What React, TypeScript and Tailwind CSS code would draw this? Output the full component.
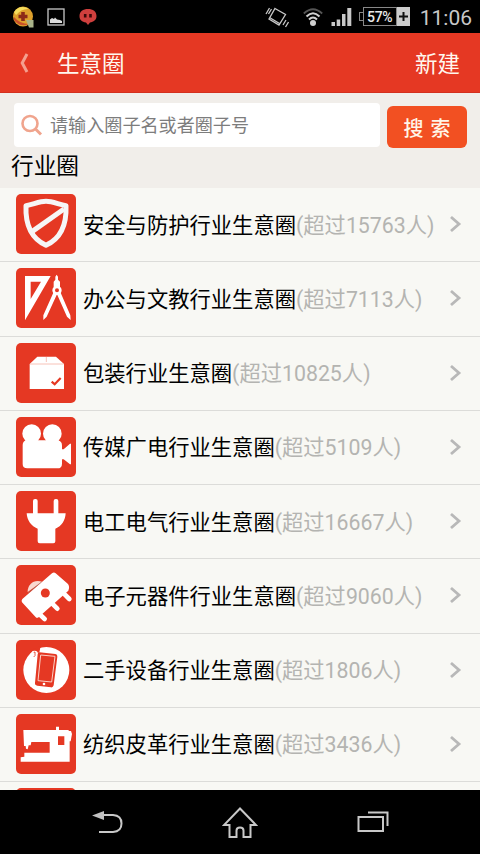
import type { ReactNode } from "react";

interface Circle {
  name: string;
  members: number;
  icon: ReactNode;
}

/* Industry glyphs, drawn on a 180 x 180 grid. */
const icons = {
  shield: (
    <g fill="none" stroke="#f6f6f6" strokeWidth="15" strokeLinejoin="round">
      <path d="M90 22C70 22 50 32 30 35C28 84 42 132 90 154C138 132 152 84 150 35C130 32 110 22 90 22Z" />
      <path d="M49 112L144 45" strokeWidth="15" />
    </g>
  ),
  drafting: (
    <g>
      <path
        d="M27 24H104L27 157ZM44 41V93L75 41Z"
        fill="#fff"
        fillRule="evenodd"
      />
      <path d="M118 26L122 20L126 26V35L132 41V57H113V41L118 35Z" fill="#fff" />
      <circle cx="123" cy="67" r="10" fill="none" stroke="#fff" strokeWidth="8" />
      <path d="M113 72L123 79L92 146L82 156L82 142ZM133 72L123 79L153 146L164 156L163 142Z" fill="#fff" />
    </g>
  ),
  box: (
    <g>
      <path d="M64 41H120L144 63V138H41V63Z" fill="#fff" />
      <path d="M42 63H143M91 42V57" stroke="#f3a595" strokeWidth="2" />
      <path d="M107 116L116 124L134 105" fill="none" stroke="#e53823" strokeWidth="6.500" />
    </g>
  ),
  camera: (
    <g fill="#fff">
      <circle cx="47" cy="50" r="28" />
      <circle cx="109" cy="50" r="28" />
      <path d="M30 70H126Q138 73 138 86V97H143L162 80H165V142H162L143 127H138V140Q138 154 124 154H34Q20 154 20 141V84Q20 74 30 70Z" />
    </g>
  ),
  plug: (
    <g fill="#fff">
      <rect x="51" y="24" width="14" height="50" rx="6" />
      <rect x="113" y="24" width="14" height="50" rx="6" />
      <path d="M32 67H149C148 88 137 106 118 113V151Q118 157 112 157H71Q65 157 65 151V113C46 106 33 88 32 67Z" />
    </g>
  ),
  chip: (
    <g>
      <path d="M35 81C34 58 54 42 78 50Z" fill="#f9d8cf" />
      <path d="M108 25Q114 20 119 25L156 57Q162 66 157 77L66 158Q62 160 58 155L18 112Q15 107 19 102Z" fill="#fff" />
      <path d="M143 85L160 102M108 115L124 131M70 147L86 162" stroke="#fff" strokeWidth="14" strokeLinecap="round" />
      <circle cx="88" cy="84" r="13.500" fill="#e53823" />
      <path d="M36 84L76 51" stroke="#8d8175" strokeWidth="1.500" />
    </g>
  ),
  phone: (
    <g>
      <circle cx="91" cy="90" r="69" fill="#fff" />
      <path d="M44 31L74 17L70 38H65L63 45L56 34Z" fill="#e53823" />
      <path d="M50 33Q65 29 66 42L62 53H48L43 42Z" fill="#fff" />
      <path d="M53 37L57 36V47L53 51" fill="none" stroke="#e53823" strokeWidth="2.500" />
      <path d="M70 37L118 42Q125 43 124 50L113 136Q111 143 105 142L64 137Q56 136 57 129L65 43Q66 37 70 37Z" fill="#e53823" />
      <path d="M74 45L117 49L107 126L66 122Z" fill="none" stroke="#fbd0c6" strokeWidth="3" />
      <circle cx="84" cy="132" r="4" fill="#fff" />
    </g>
  ),
  sewing: (
    <path
      d="M22 48H120V38H129V48H157L159 51H165L168 60L164 82H161V143H14V130L25 128V116H101V84H46L44 94H38L35 106L30 104L29 96H24ZM126 67V93H145V67Z"
      fill="#fff"
      fillRule="evenodd"
    />
  ),
};

const circles: Circle[] = [
  { name: "安全与防护行业生意圈", members: 15763, icon: icons.shield },
  { name: "办公与文教行业生意圈", members: 7113, icon: icons.drafting },
  { name: "包装行业生意圈", members: 10825, icon: icons.box },
  { name: "传媒广电行业生意圈", members: 5109, icon: icons.camera },
  { name: "电工电气行业生意圈", members: 16667, icon: icons.plug },
  { name: "电子元器件行业生意圈", members: 9060, icon: icons.chip },
  { name: "二手设备行业生意圈", members: 1806, icon: icons.phone },
  { name: "纺织皮革行业生意圈", members: 3436, icon: icons.sewing },
];

function StatusBar() {
  return (
    <div className="flex h-[33px] shrink-0 items-center bg-black pl-[12px] pr-[8px] text-[#c8c8c8]">
      <svg className="h-[22px] w-[22px]" viewBox="0 0 22 22">
        <circle cx="11" cy="10.500" r="10" fill="#dda02c" />
        <path d="M2 6Q8-2 17 3Q10 2 4 9Z" fill="#f3dc5c" />
        <path d="M2 14Q8 22 17 18Q8 18 2 11Z" fill="#c9502a" />
        <path d="M11 6V15M6.500 10.500H15.500" stroke="#8c2a18" strokeWidth="3.600" />
        <path d="M14 14H21.500V21.500H17Z" fill="#a9b389" />
      </svg>
      <svg className="ml-[13px] h-[18px] w-[18px]" viewBox="0 0 18 18">
        <rect x="1" y="1" width="16" height="16" fill="none" stroke="#c8c8c8" strokeWidth="1.300" />
        <path d="M3 15V11.500L5 10L7 11L8 9.500L10 11.500L13 12L15 13V15Z" fill="#ddd" />
      </svg>
      <svg className="ml-[14px] h-[18px] w-[18px]" viewBox="0 0 18 18">
        <path d="M9 1C14 1 17.500 3.500 17.500 8C17.500 12 14.500 14 11 14.500L9 17L7 14.500C3 14 .5 12 .5 8C.5 3.500 4 1 9 1Z" fill="#cf3f3d" />
        <path d="M6.200 6V9.500M11.500 6V9.500" stroke="#3a0808" strokeWidth="2.600" />
      </svg>
      <svg className="ml-auto h-[22px] w-[24px]" viewBox="0 0 24 22" fill="none" stroke="#c8c8c8" strokeWidth="1.300">
        <path d="M10 2.500L20.500 8.500L14 19L4 13ZM4.500 11.500L14.500 17.500M1 8L4.500 2M3.500 8L6.500 3M18 19L21 14M20.500 21L23.500 16" />
      </svg>
      <svg className="ml-[14px] h-[20px] w-[20px]" viewBox="0 0 20 20" fill="none">
        <path d="M.8 6.500Q10-2 19.200 6.500" stroke="#555" strokeWidth="1.800" />
        <path d="M3.500 9.500Q10 3 16.500 9.500M6 12.500Q10 8.500 14 12.500" stroke="#d0d0d0" strokeWidth="2" />
        <circle cx="10" cy="16" r="3" fill="#d0d0d0" />
      </svg>
      <svg className="ml-[8px] h-[18px] w-[21px]" viewBox="0 0 21 18" fill="#c8c8c8">
        <path d="M.5 14H4V18H.500ZM5.700 11.500H9.200V18H5.700ZM11 6H14.500V18H11ZM16.300 0H20.300V18H16.300Z" />
      </svg>
      <div className="ml-[7px] flex h-[19px] items-stretch">
        <span className="my-[5px] w-[4px] border border-r-0 border-[#888]" />
        <span className="flex w-[34px] items-center justify-center border border-[#888] text-[14px] font-medium leading-none tracking-[-0.3px] text-[#e8e8e8]">
          57%
        </span>
        <span className="flex w-[13px] items-center justify-center bg-[#cdcdcd]">
          <svg className="h-[9px] w-[9px]" viewBox="0 0 9 9">
            <path d="M4.500 0V9M0 4.500H9" stroke="#111" strokeWidth="2" />
          </svg>
        </span>
      </div>
      <span className="ml-[10px] pt-[3px] text-[21px] leading-none">11:06</span>
    </div>
  );
}

function Header() {
  return (
    <header className="flex h-[60px] shrink-0 items-center border-b border-[#d3301f] bg-[#e53823] px-[20px] text-[22.500px] text-[#fff7ee]">
      <svg className="h-[20px] w-[9px]" viewBox="0 0 9 20">
        <path d="M7 1L2.200 10L7 19" fill="none" stroke="#f4a08f" strokeWidth="3" />
      </svg>
      <h1 className="ml-[28px] pt-[5px]">生意圈</h1>
      <button type="button" className="ml-auto pt-[5px]">
        新建
      </button>
    </header>
  );
}

function SearchSection() {
  return (
    <section className="h-[95px] shrink-0 bg-[#f1eeea] pt-[10px]">
      <div className="flex gap-[7px] pl-[14px]">
        <div className="flex h-[44px] w-[366px] items-center rounded-[4px] bg-white pl-[7px]">
          <svg className="h-[22px] w-[22px]" viewBox="0 0 22 22" fill="none" stroke="#f0a48d">
            <circle cx="9" cy="9.500" r="7.500" strokeWidth="2.600" />
            <path d="M14.500 15L20 20.500" strokeWidth="3" />
          </svg>
          <span className="ml-[7px] pt-[2px] text-[18.100px] text-[#7d7d7d]">
            请输入圈子名或者圈子号
          </span>
        </div>
        <button
          type="button"
          className="mt-[3px] flex h-[42px] w-[80px] items-center justify-center gap-[7px] rounded-[6px] bg-[#f25022] pt-[4px] text-[20px] font-medium text-[#fff5e8]"
        >
          <span>搜</span>
          <span>索</span>
        </button>
      </div>
      <h2 className="pl-[11px] pt-[2px] text-[22.700px] leading-[33px] text-black">行业圈</h2>
    </section>
  );
}

function CircleRow({ circle }: { circle: Circle }) {
  return (
    <li className="flex h-[74.250px] shrink-0 items-center border-b border-[#dcdcd9] pb-[1px] pl-[16px] pr-[18px]">
      <svg className="h-[60px] w-[60px] shrink-0 rounded-[5px] bg-[#e53823]" viewBox="0 0 180 180">
        {circle.icon}
      </svg>
      <p className="ml-[7px] whitespace-nowrap pt-[3px] text-[21.300px] text-black">
        {circle.name}
        <span className="text-[#b4b4b1]">(超过{circle.members}人)</span>
      </p>
      <svg className="ml-auto h-[18px] w-[13px] shrink-0" viewBox="0 0 13 18">
        <path d="M2 2L10 9L2 16" fill="none" stroke="#b8b8b8" strokeWidth="2.800" />
      </svg>
    </li>
  );
}

function NavBar() {
  return (
    <nav className="flex h-[64px] shrink-0 items-center justify-between bg-black pl-[91px] pr-[91px]">
      <svg className="h-[34px] w-[32px]" viewBox="0 0 32 34">
        <path d="M10 10H22Q30.500 10.500 30.500 18.500Q30.500 26.500 22 27H8" fill="none" stroke="#c8c8c8" strokeWidth="2" />
        <path d="M1 10.500L13 6V15Z" fill="#c0c0c0" />
      </svg>
      <svg className="h-[34px] w-[36px]" viewBox="0 0 36 34" fill="none" stroke="#c8c8c8" strokeWidth="2">
        <path d="M18 3.500L2 20H7.500V32H14.500V25.500Q14.500 22.500 18 22.500Q21.500 22.500 21.500 25.500V32H28.500V20H34Z" />
      </svg>
      <svg className="h-[34px] w-[32px]" viewBox="0 0 32 34" fill="none" stroke="#c8c8c8" strokeWidth="2">
        <path d="M1.500 12H26V26H1.500ZM11 7.500H30.500V21" />
      </svg>
    </nav>
  );
}

export default function App() {
  return (
    <div className="flex h-[854px] w-[480px] flex-col overflow-hidden bg-black font-['Roboto','Noto_Sans_CJK_SC',sans-serif]">
      <StatusBar />
      <Header />
      <SearchSection />
      <ul className="flex min-h-0 flex-1 flex-col overflow-hidden bg-[#f8f8f4]">
        {circles.map((circle) => (
          <CircleRow key={circle.name} circle={circle} />
        ))}
        {/* Next row, only just scrolled into view */}
        <li className="shrink-0 pl-[16px] pt-[6px]">
          <div className="h-[60px] w-[60px] rounded-[5px] bg-[#e53823]" />
        </li>
      </ul>
      <NavBar />
    </div>
  );
}
